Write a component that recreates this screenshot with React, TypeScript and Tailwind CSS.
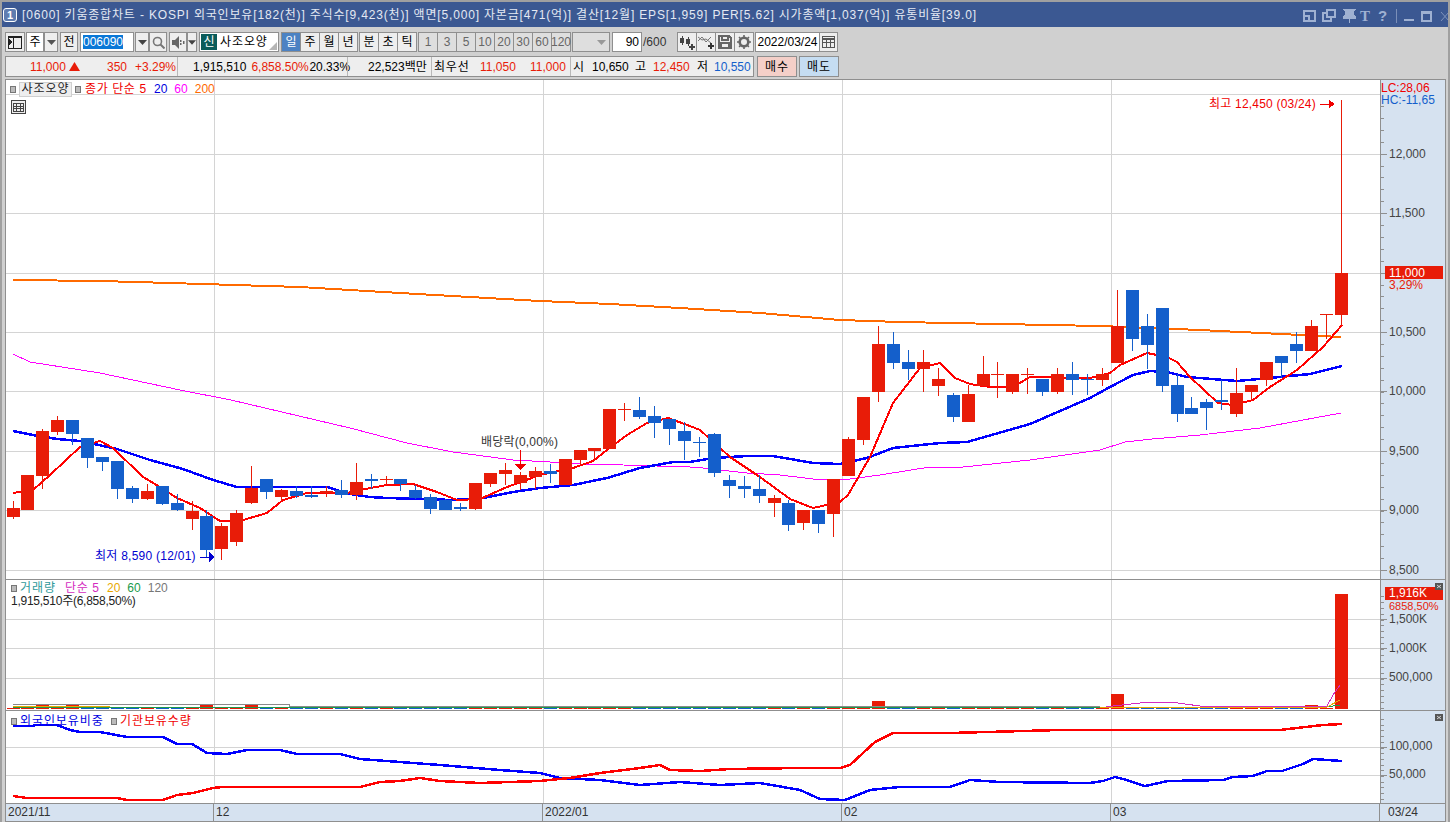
import type { ReactNode } from "react";

const RED = "#e81c08";
const BLUE = "#145fcb";

// [body top, body bottom, wick top, wick bottom, up?] in screen px
const CANDLES: [number, number, number, number, number][] = [
  [508, 517, 501, 519, 1], [475, 510, 475, 510, 1], [431, 476, 429, 489, 1], [420, 432, 416, 435, 1], [420, 434, 420, 445, 0],
  [438, 458, 438, 468, 0], [457, 462, 457, 471, 0], [461, 489, 461, 499, 0], [488, 499, 486, 503, 0], [491, 499, 484, 500, 1],
  [486, 504, 486, 505, 0], [503, 510, 494, 511, 0], [511, 519, 501, 530, 1], [516, 550, 510, 558, 0], [526, 549, 523, 560, 1],
  [513, 542, 510, 546, 1], [488, 503, 466, 504, 1], [479, 492, 479, 499, 0], [490, 497, 489, 501, 1], [491, 496, 486, 498, 0],
  [495, 497, 486, 498, 0], [491, 493, 486, 497, 1], [490, 495, 480, 498, 0], [482, 495, 463, 500, 1], [479, 481, 474, 489, 0],
  [479, 480, 476, 485, 1], [479, 484, 479, 491, 0], [490, 498, 485, 499, 0], [497, 509, 494, 514, 0], [500, 510, 499, 510, 0],
  [507, 509, 503, 511, 0], [483, 509, 483, 510, 1], [473, 484, 473, 487, 1], [470, 474, 463, 485, 1], [475, 483, 472, 490, 1],
  [471, 477, 467, 489, 1], [471, 474, 464, 483, 0], [459, 485, 459, 485, 1], [450, 460, 450, 465, 1], [448, 451, 448, 461, 1],
  [409, 449, 409, 449, 1], [409, 410, 403, 421, 1], [410, 417, 397, 419, 0], [416, 423, 406, 438, 0], [419, 429, 419, 445, 0],
  [431, 441, 422, 460, 0], [442, 443, 437, 457, 0], [434, 473, 433, 477, 0], [480, 486, 475, 498, 0], [486, 489, 476, 498, 0],
  [489, 496, 475, 503, 0], [498, 503, 495, 517, 1], [503, 525, 500, 531, 0], [510, 523, 510, 530, 1], [510, 524, 510, 533, 0],
  [479, 514, 479, 537, 1], [439, 476, 437, 476, 1], [397, 440, 397, 445, 1], [344, 392, 326, 402, 1], [344, 363, 332, 369, 0],
  [362, 369, 350, 380, 0], [362, 369, 350, 392, 1], [379, 386, 368, 396, 1], [395, 417, 393, 422, 0], [394, 422, 385, 422, 1],
  [374, 386, 356, 386, 1], [374, 375, 362, 398, 1], [374, 392, 374, 394, 1], [374, 375, 368, 394, 1], [379, 392, 379, 396, 0],
  [374, 392, 368, 394, 1], [374, 380, 362, 395, 0], [379, 380, 374, 395, 0], [374, 380, 368, 386, 1], [326, 363, 290, 363, 1],
  [290, 339, 290, 351, 0], [326, 345, 314, 369, 0], [308, 386, 308, 392, 0], [385, 414, 374, 422, 0], [408, 414, 397, 414, 0],
  [402, 408, 399, 430, 0], [400, 402, 380, 410, 0], [393, 414, 368, 417, 1], [385, 392, 385, 400, 1], [362, 380, 362, 386, 1],
  [356, 363, 356, 378, 0], [344, 351, 332, 363, 0], [326, 351, 320, 351, 1], [314, 315, 314, 339, 1], [273, 315, 100, 326, 1],
];

// left edge of candle i
const left = (i: number) => Math.max(7, Math.floor(6.95 + 14.924 * i));

const MA200 = "13,280 100,281 170,283 300,287 400,293 540,301 610,304 680,308 760,313 840,320 900,322 1000,324 1100,326 1200,330 1341,337";
const MA60 = "13,354 30,362 100,373 180,390 231,400 350,428 407,443 453,452 513,460 550,462 580,464 623,465 690,467 703,468 747,473 780,475 813,479 850,479 880,475 930,467 963,467 1030,460 1100,450 1125,442 1152,439 1200,435 1260,428 1341,413";
const MA20 = "13,431 33,435 57,439 80,441 117,449 150,460 183,469 213,480 237,487 327,487 350,494 370,497 387,498 453,500 483,498 513,492 540,488 573,485 607,478 640,468 673,462 690,462 713,458 747,456 773,456 813,463 840,464 867,458 893,448 940,443 967,442 1030,424 1090,398 1110,387 1133,375 1150,371 1167,372 1187,377 1237,381 1270,378 1310,374 1342,366";
const MA5 = "13,493 33,490 50,475 80,447 100,441 113,448 143,477 160,487 177,498 200,508 220,521 243,520 267,513 283,500 307,493 347,493 360,490 387,485 413,484 437,492 457,500 480,499 507,487 540,475 573,468 593,461 607,450 627,435 647,423 668,418 690,426 700,430 730,457 760,477 790,499 813,508 840,502 848,495 870,457 893,403 920,368 940,363 955,378 970,384 990,387 1013,387 1030,377 1090,378 1110,373 1120,365 1147,353 1167,357 1177,362 1190,377 1218,403 1233,405 1253,400 1270,387 1297,370 1323,347 1342,325";
const FOREIGN = "13,726 33,726 35,725 57,725 70,730 80,732 100,732 127,737 163,737 177,744 192,744 207,753 227,754 247,750 280,750 297,754 340,754 360,759 400,762 440,765 500,770 540,773 560,778 600,780 640,785 680,782 720,785 760,783 800,790 820,799 845,800 870,790 900,787 950,787 970,780 1000,782 1090,783 1103,781 1115,777 1123,779 1145,786 1168,781 1223,780 1233,777 1253,776 1267,771 1282,771 1303,764 1313,759 1327,760 1342,761";
const INST = "13,796 27,798 87,798 117,798 127,800 163,800 177,795 193,793 213,788 223,787 360,787 380,782 400,781 420,778 440,781 480,783 540,781 570,778 600,773 640,768 660,765 670,770 700,771 730,769 800,768 840,768 850,765 875,742 893,733 950,733 1060,730 1280,730 1297,728 1323,725 1342,724";

const VGRID = [214, 543, 842, 1111];
const PRICE_GRID = [94, 154, 213, 273, 332, 391, 451, 510, 570];
const TALL: Record<number, number> = { 2: 5, 4: 5, 13: 4, 16: 4, 56: 2, 58: 8, 74: 15, 87: 4, 89: 115 };

function Btn({ w, active, children, className = "" }: { w: number; active?: boolean; children?: ReactNode; className?: string }) {
  return (
    <div
      style={{ width: w }}
      className={`flex h-[20px] shrink-0 items-center justify-center border border-[#8f8f8f] text-[12px] ${
        active ? "bg-[#4c82c3] text-white" : "bg-[#eeeeee] text-black"
      } ${className}`}
    >
      {children}
    </div>
  );
}

function Arrow({ color = "#333" }: { color?: string }) {
  return (
    <svg width="9" height="5" viewBox="0 0 9 5">
      <path d="M0 0h9L4.500 5z" fill={color} />
    </svg>
  );
}

function TitleIcons() {
  return (
    <svg width="150" height="24" viewBox="1296 2 150 24" fill="none" stroke="#9fb1d2" strokeWidth="1.500" shapeRendering="crispEdges">
      <rect x="1300" y="10" width="11" height="10" />
      <path d="M1300 15h5v5" />
      <rect x="1323" y="9" width="8" height="7" />
      <path d="M1323 12h-4v8h8v-4" />
      <path d="M1341 9h9l-1 1v4l2 2v1h-11v-1l2-2v-4zM1345.500 17v5" fill="#9fb1d2" />
      <text x="1356" y="20" fill="#9fb1d2" stroke="none" fontSize="15" fontWeight="700" fontFamily="'Liberation Serif',serif">T</text>
      <text x="1374" y="20" fill="#9fb1d2" stroke="none" fontSize="15" fontWeight="700">?</text>
      <path d="M1392.500 8v14" stroke="#7b8fb8" />
      <path d="M1400 19h10" strokeWidth="2" />
      <rect x="1418" y="11" width="9" height="9" />
      <path d="M1418 12h9" strokeWidth="2" />
      <path d="M1437 11l8 9M1445 11l-8 9" stroke="#7f93bb" strokeWidth="1" shapeRendering="auto" />
    </svg>
  );
}

function Toolbar() {
  return (
    <div className="mt-[5px] flex h-[20px] items-center pl-[5px]">
      <Btn w={20}>
        <svg width="14" height="13" viewBox="0 0 14 13" fill="none" stroke="#222" shapeRendering="crispEdges">
          <rect x="0.500" y="0.500" width="13" height="12" />
          <path d="M5.500 1v11" />
          <path d="M1 3l3 3-3 3z" fill="#222" />
          <path d="M0 1h14" />
        </svg>
      </Btn>
      <Btn w={18} className="ml-px bg-white!">주</Btn>
      <Btn w={14}><Arrow color="#555" /></Btn>
      <Btn w={18} className="ml-[2px]">전</Btn>
      <div className="ml-[2px] flex h-[20px] w-[54px] items-center border border-[#8f8f8f] bg-white pl-[2px]">
        <span className="bg-[#0a78d7] text-[12px] leading-[14px] text-white">006090</span>
      </div>
      <Btn w={14} className="ml-px"><Arrow color="#444" /></Btn>
      <Btn w={18}>
        <svg width="13" height="13" viewBox="0 0 13 13" fill="none" stroke="#777" strokeWidth="1.600">
          <circle cx="5.500" cy="5.500" r="4" />
          <path d="M8.500 8.500l4 4" strokeWidth="2" />
        </svg>
      </Btn>
      <Btn w={18} className="ml-[2px]">
        <svg width="13" height="13" viewBox="0 0 13 13" fill="#666">
          <path d="M0 4h3l4-4v13l-4-4H0z" />
          <rect x="8" y="4" width="1.500" height="2" />
          <rect x="8" y="7" width="1.500" height="2" />
          <rect x="11" y="5" width="1.500" height="3" />
        </svg>
      </Btn>
      <Btn w={10}><Arrow color="#444" /></Btn>
      <div className="relative ml-[2px] flex h-[20px] w-[80px] items-center border border-[#8f8f8f] bg-white pl-px">
        <span className="flex h-[16px] w-[16px] items-center justify-center bg-[#0a5c5a] text-[12px] text-white">신</span>
        <span className="ml-[3px] text-[12px] tracking-[0.9px]">사조오양</span>
        <svg className="absolute bottom-px right-px" width="8" height="8" viewBox="0 0 8 8">
          <path d="M8 0v8H0z" fill="#b5b5b5" />
        </svg>
      </div>
      <div className="ml-[2px] flex">
        <Btn w={20} active>일</Btn>
        <Btn w={20} className="-ml-px">주</Btn>
        <Btn w={20} className="-ml-px">월</Btn>
        <Btn w={20} className="-ml-px">년</Btn>
      </div>
      <div className="ml-[1px] flex">
        <Btn w={20}>분</Btn>
        <Btn w={20} className="-ml-px">초</Btn>
        <Btn w={20} className="-ml-px">틱</Btn>
      </div>
      <div className="ml-[1px] flex">
        {["1", "3", "5", "10", "20", "30", "60", "120"].map((n) => (
          <Btn key={n} w={20} className="-ml-px bg-[#dedede]! text-[#666]! first:ml-0">{n}</Btn>
        ))}
      </div>
      <div className="ml-px flex h-[20px] w-[38px] items-center justify-end border border-[#8f8f8f] bg-[#dedede] pr-[3px]">
        <Arrow color="#999" />
      </div>
      <div className="ml-[2px] flex h-[20px] w-[30px] items-center justify-end border border-[#8f8f8f] bg-white pr-[2px] text-[12px]">90</div>
      <span className="ml-[1px] w-[34px] text-[12px] text-[#333]">/600</span>
      <div className="flex">
        <Btn w={20}>
          <svg width="16" height="15" viewBox="0 0 16 15" fill="#444" shapeRendering="crispEdges">
            <rect x="1" y="3" width="4" height="5" />
            <rect x="2.500" y="1" width="1" height="9" />
            <rect x="7" y="4" width="4" height="5" />
            <rect x="8.500" y="2" width="1" height="9" />
            <path d="M10 11h6v2h-6zM12 9h2v6h-2z" />
          </svg>
        </Btn>
        <Btn w={20} className="-ml-px">
          <svg width="16" height="15" viewBox="0 0 16 15" fill="none" stroke="#777">
            <path d="M0 6l4-4 4 5 5-5" />
            <path d="M0 2l4 3 4-1 5 4" />
            <path d="M10 11h6M13 8v6" stroke="#333" strokeWidth="2" />
          </svg>
        </Btn>
        <Btn w={20} className="-ml-px">
          <svg width="14" height="14" viewBox="0 0 14 14" fill="none" stroke="#666" strokeWidth="1.500" shapeRendering="crispEdges">
            <path d="M1 1h10l2 2v10H1z" />
            <path d="M4 1v4h6V1M3 13V8h8v5" />
          </svg>
        </Btn>
        <Btn w={20} className="-ml-px">
          <svg width="14" height="14" viewBox="0 0 14 14">
            <circle cx="7" cy="7" r="4.300" fill="none" stroke="#666" strokeWidth="2.600" />
            <path d="M7 0v14M0 7h14M2 2l10 10M12 2L2 12" stroke="#666" strokeWidth="1.600" strokeDasharray="2.400 9.200 2.400" />
          </svg>
        </Btn>
      </div>
      <div className="ml-px flex h-[20px] w-[65px] items-center justify-center border border-[#8f8f8f] bg-white text-[12px]">2022/03/24</div>
      <Btn w={19} className="-ml-px">
        <svg width="13" height="12" viewBox="0 0 13 12" fill="none" stroke="#555" shapeRendering="crispEdges">
          <rect x="0.500" y="0.500" width="12" height="11" />
          <path d="M0 2.500h13" strokeWidth="2" />
          <path d="M4.500 3v8M8.500 3v8M1 6.500h11" />
        </svg>
      </Btn>
    </div>
  );
}

function InfoBar() {
  return (
    <div className="mt-[4px] flex h-[21px] items-center pl-[5px] text-[12px]">
      <div className="flex h-full w-[749px] items-center border border-[#8f8f8f] bg-[#eeeeee]">
        <div className="flex h-full w-[171px] items-center text-[#e81c08]">
          <span className="ml-[24px] w-[39px]">11,000</span>
          <svg width="11" height="9" viewBox="0 0 11 9"><path d="M5.500 0L11 9H0z" fill="#e81c08" /></svg>
          <span className="w-[47px] text-right">350</span>
          <span className="w-[49px] text-right">+3.29%</span>
        </div>
        <div className="flex h-full w-[170px] items-center border-l border-[#b8b8b8]">
          <span className="ml-[15px] w-[54px]">1,915,510</span>
          <span className="ml-[5px] w-[54px] text-[#e81c08]">6,858.50%</span>
          <span className="ml-[4px]">20.33%</span>
        </div>
        <div className="flex h-full w-[84px] items-center border-l border-[#b8b8b8] pl-[20px]">22,523백만</div>
        <div className="flex h-full w-[139px] items-center border-l border-[#b8b8b8] pl-[2px]">
          <span className="w-[46px] tracking-[0.8px]">최우선</span>
          <span className="w-[36px] text-[#e81c08]">11,050</span>
          <span className="ml-[14px] text-[#e81c08]">11,000</span>
        </div>
        <div className="flex h-full flex-1 items-center border-l border-[#b8b8b8] pl-[2px]">
          <span className="w-[19px]">시</span>
          <span className="w-[43px]">10,650</span>
          <span className="w-[18px]">고</span>
          <span className="w-[44px] text-[#e81c08]">12,450</span>
          <span className="w-[17px]">저</span>
          <span className="text-[#145fcb]">10,550</span>
        </div>
      </div>
      <div className="ml-[3px] flex h-full w-[40px] items-center justify-center border border-[#8f8f8f] bg-[#f4cfc8] tracking-[1px]">매수</div>
      <div className="ml-[2px] flex h-full w-[40px] items-center justify-center border border-[#8f8f8f] bg-[#c5ddf2] tracking-[1px]">매도</div>
    </div>
  );
}

function Plot({ y, h, grid, children }: { y: number; h: number; grid: number[]; children?: ReactNode }) {
  return (
    <svg className="absolute inset-0" width="1374" height={h} viewBox={`6 ${y} 1374 ${h}`} shapeRendering="crispEdges">
      {grid.map((g) => (
        <rect key={g} x="6" y={g} width="1374" height="1" fill="#d4d4d4" />
      ))}
      {VGRID.map((g) => (
        <rect key={g} x={g} y={y} width="1" height={h} fill="#d4d4d4" />
      ))}
      {children}
    </svg>
  );
}

function Axis({ y, h, major, minor, labels, children }: { y: number; h: number; major: number[]; minor: number[]; labels: [number, string][]; children?: ReactNode }) {
  return (
    <svg className="absolute inset-0" width="64" height={h} viewBox={`1381 ${y} 64 ${h}`}>
      {minor.map((t) => (
        <rect key={t} x="1381" y={t} width="3" height="1" fill="#8f8f8f" shapeRendering="crispEdges" />
      ))}
      {major.map((t) => (
        <rect key={t} x="1381" y={t} width="6" height="1" fill="#8f8f8f" shapeRendering="crispEdges" />
      ))}
      {labels.map(([ly, s]) => (
        <text key={s} x="1389" y={ly + 4} fontSize="12" fill="#444">{s}</text>
      ))}
      {children}
    </svg>
  );
}

function CloseBox() {
  return (
    <div className="absolute right-[2px] top-[3px] flex h-[7px] w-[8px] items-center justify-center bg-[#555]">
      <svg width="6" height="5" viewBox="0 0 6 5" stroke="#eee" strokeWidth="0.800"><path d="M1 1l4 3M5 1L1 4" /></svg>
    </div>
  );
}

const Square = () => <span className="inline-block h-[7px] w-[6px] border border-[#777] bg-[#bbb]" />;

function range(from: number, to: number, step: number) {
  const out: number[] = [];
  for (let v = from; v < to; v += step) out.push(Math.round(v));
  return out;
}

export default function App() {
  return (
    <div className="flex h-[822px] w-[1450px] flex-col overflow-hidden border-l-2 border-r-2 border-t-2 border-[#a0a0a0] bg-[#d0d0d0] text-black [font-family:'Liberation_Sans','Noto_Sans_CJK_KR',sans-serif]">
      {/* title bar */}
      <div className="-ml-[2px] -mr-[2px] flex h-[25px] shrink-0 items-center justify-between bg-[#3b5892] pl-[3px] pt-px text-[12px] text-[#e4e9f3]">
        <div className="flex items-center">
          <span className="flex h-[14px] w-[14px] items-center justify-center rounded-[3px] border border-white bg-[#5f7db0] text-[11px] font-bold text-white">1</span>
          <span className="ml-[5px] whitespace-pre tracking-[0.83px]">[0600] 키움종합차트 - KOSPI 외국인보유[182(천)] 주식수[9,423(천)] 액면[5,000] 자본금[471(억)] 결산[12월] EPS[1,959] PER[5.62] 시가총액[1,037(억)] 유통비율[39.0]</span>
        </div>
        <TitleIcons />
      </div>

      <div className="-ml-[2px] -mr-[2px] flex min-h-0 flex-1 flex-col">
        <Toolbar />
        <InfoBar />

        {/* chart frame */}
        <div className="ml-[5px] mr-[4px] mt-[2px] flex h-[743px] w-[1441px] flex-col border border-[#8f8f8f] bg-white">
          {/* price pane */}
          <div className="flex h-[500px] shrink-0 border-b border-[#8f8f8f]">
            <div className="relative w-[1374px] shrink-0">
              <Plot y={80} h={499} grid={PRICE_GRID}>
                <polyline points={MA200} fill="none" stroke="#ff6a00" strokeWidth="2" />
                <polyline points={MA60} fill="none" stroke="#ff00ff" strokeWidth="1" />
                <polyline points={MA20} fill="none" stroke="#0000ff" strokeWidth="2.500" />
                <polyline points={MA5} fill="none" stroke="#ff0000" strokeWidth="2" />
                {CANDLES.map(([t, b, wt, wb, up], i) => {
                  const c = up ? RED : BLUE;
                  return (
                    <g key={i} fill={c}>
                      <rect x={left(i) + 6} y={wt} width="1" height={wb - wt} />
                      <rect x={left(i)} y={t} width="13" height={Math.max(b - t, 1)} />
                    </g>
                  );
                })}
                <text x="1209" y="108" fontSize="12" letterSpacing="0.2" fill="#f00000">최고 12,450 (03/24)</text>
                <path d="M1320 104h9" stroke="#f00000" strokeWidth="1" />
                <path d="M1329 100l6 4-6 4z" fill="#f00000" />
                <text x="95" y="560" fontSize="12" letterSpacing="0.25" fill="#0000d0">최저 8,590 (12/01)</text>
                <path d="M200 557h9" stroke="#0000d0" strokeWidth="1" />
                <path d="M209 552l6 5-6 5z" fill="#0000d0" />
                <text x="481" y="446" fontSize="12" letterSpacing="0.2" fill="#333">배당락(0,00%)</text>
                <path d="M520.500 450v14" stroke="#f00000" strokeWidth="1" />
                <path d="M515 464h11l-5.500 6z" fill="#f00000" />
              </Plot>
              <div className="absolute left-[4px] top-0 flex items-center text-[12px]">
                <Square />
                <span className="ml-[3px] flex h-[15px] w-[53px] items-center justify-center border border-[#cfcfcf] bg-[#eeeeee] tracking-[0.9px] text-[#222]">사조오양</span>
                <span className="ml-[3px]"><Square /></span>
                <span className="ml-[4px] w-[61px] whitespace-pre tracking-[0.6px] text-[#f00000]">종가 단순 5</span>
                <span className="ml-[8px] text-[#0000e0]">20</span>
                <span className="ml-[7px] text-[#ff00ff]">60</span>
                <span className="ml-[7px] text-[#ff6a00]">200</span>
              </div>
              <svg className="absolute left-[5px] top-[20px]" width="15" height="14" viewBox="0 0 15 14" fill="#eee" stroke="#444" shapeRendering="crispEdges">
                <rect x="0.500" y="0.500" width="14" height="13" />
                <path d="M2.500 3.500h10v8h-10zM2.500 6.500h10M2.500 8.500h10M5.500 3v9M9.500 3v9" strokeWidth="1" />
              </svg>
            </div>
            <div className="relative w-[65px] border-l border-[#8f8f8f] bg-[#d6e2f0]">
              <Axis
                y={80}
                h={499}
                major={[154, 213, 273, 332, 391, 451, 510, 570]}
                minor={range(106, 578, 11.9)}
                labels={[[154, "12,000"], [213, "11,500"], [332, "10,500"], [391, "10,000"], [451, "9,500"], [510, "9,000"], [570, "8,500"]]}
              >
                <text x="1381" y="92" fontSize="12" fill="#f00000">LC:28,06</text>
                <text x="1381" y="104" fontSize="12" fill="#145fcb">HC:-11,65</text>
                <rect x="1385" y="266" width="58" height="13" fill={RED} />
                <text x="1389" y="277" fontSize="12" fill="#fff">11,000</text>
                <text x="1389" y="289" fontSize="12" fill={RED}>3,29%</text>
              </Axis>
            </div>
          </div>

          {/* volume pane */}
          <div className="flex h-[131px] shrink-0 border-b border-[#8f8f8f]">
            <div className="relative w-[1374px] shrink-0">
              <Plot y={580} h={130} grid={[619, 648, 678]}>
                {CANDLES.map(([, , , , up], i) => {
                  const h = TALL[i] ?? (i % 9 === 3 ? 2 : 1);
                  return <rect key={i} x={left(i)} y={709 - h} width="13" height={h} fill={TALL[i] ? RED : up ? RED : BLUE} />;
                })}
                <polyline points="13,704 289,704 289,706 1100,706" fill="none" stroke="#8a8a8a" strokeWidth="1" />
                <polyline points="13,706 110,706" fill="none" stroke="#e8a800" strokeWidth="1" />
                <polyline points="13,707 1327,707 1340,705" fill="none" stroke="#1a9a4a" strokeWidth="1" />
                <polyline points="1100,707 1327,707 1340,700" fill="none" stroke="#e8a800" strokeWidth="1" />
                <polyline points="1106,707 1113,706 1140,703 1170,702 1200,706 1327,706 1333,695 1340,685" fill="none" stroke="#d42bc0" strokeWidth="1" />
              </Plot>
              <div className="absolute left-[5px] top-[2px] text-[12px] leading-[13px]">
                <div className="flex items-center">
                  <Square />
                  <span className="ml-[3px] w-[36px] tracking-[0.9px] text-[#2e9a9a]">거래량</span>
                  <span className="ml-[9px] w-[34px] whitespace-pre tracking-[0.6px] text-[#d42bc0]">단순 5</span>
                  <span className="ml-[8px] text-[#e8a800]">20</span>
                  <span className="ml-[7px] text-[#1a9a4a]">60</span>
                  <span className="ml-[7px] text-[#777]">120</span>
                </div>
                <div className="tracking-[-0.25px] text-[#222]">1,915,510주(6,858,50%)</div>
              </div>
            </div>
            <div className="relative w-[65px] border-l border-[#8f8f8f] bg-[#d6e2f0]">
              <Axis
                y={580}
                h={130}
                major={[619, 648, 678]}
                minor={range(596, 709, 5.900)}
                labels={[[619, "1,500K"], [648, "1,000K"], [677, "500,000"]]}
              >
                <rect x="1385" y="587" width="58" height="13" fill={RED} />
                <text x="1389" y="597" fontSize="12" fill="#fff">1,916K</text>
                <text x="1389" y="610" fontSize="11" fill={RED}>6858,50%</text>
              </Axis>
              <CloseBox />
            </div>
          </div>

          {/* foreign holding pane */}
          <div className="flex h-[93px] shrink-0 border-b border-[#8f8f8f]">
            <div className="relative w-[1374px] shrink-0">
              <Plot y={711} h={92} grid={[747, 775]}>
                <polyline points={FOREIGN} fill="none" stroke="#0000ff" strokeWidth="2.500" />
                <polyline points={INST} fill="none" stroke="#ff0000" strokeWidth="2.500" />
              </Plot>
              <div className="absolute left-[5px] top-px flex items-center text-[12px]">
                <Square />
                <span className="ml-[3px] w-[84px] tracking-[0.9px] text-[#0000e0]">외국인보유비중</span>
                <span className="ml-[7px]"><Square /></span>
                <span className="ml-[3px] tracking-[0.9px] text-[#f00000]">기관보유수량</span>
              </div>
            </div>
            <div className="relative w-[65px] border-l border-[#8f8f8f] bg-[#d6e2f0]">
              <Axis y={711} h={92} major={[747, 775]} minor={range(719, 800, 5.700)} labels={[[746, "100,000"], [774, "50,000"]]} />
              <CloseBox />
            </div>
          </div>

          {/* date axis */}
          <div className="flex h-[17px] flex-1 bg-[#d6e2f0] text-[12px] leading-[17px] text-[#333]">
            <div className="w-[208px] border-r border-[#8f8f8f] pl-[2px]">2021/11</div>
            <div className="w-[329px] border-r border-[#8f8f8f] pl-[2px]">12</div>
            <div className="w-[299px] border-r border-[#8f8f8f] pl-[2px]">2022/01</div>
            <div className="w-[269px] border-r border-[#8f8f8f] pl-[2px]">02</div>
            <div className="w-[269px] border-r border-[#8f8f8f] pl-[2px]">03</div>
            <div className="flex-1 pl-[8px]">03/24</div>
          </div>
        </div>
      </div>
    </div>
  );
}
